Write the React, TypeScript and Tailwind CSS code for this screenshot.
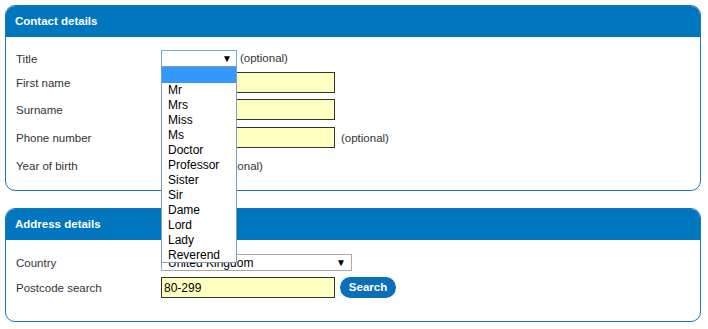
import React from "react";

const font = { fontFamily: '"Liberation Sans", Arial, sans-serif' };

function Arrow() {
  return <span className="text-[10px] leading-none text-black">▼</span>;
}

export default function App() {
  const options = ["Mr", "Mrs", "Miss", "Ms", "Doctor", "Professor", "Sister", "Sir", "Dame", "Lord", "Lady", "Reverend"];
  const label = "w-[145px] pt-[2px]";
  return (
    <div className="relative w-[708px] h-[329px] bg-white text-[11.5px] text-[#333]" style={font}>
      <div className="pt-[5px] pl-[5px] w-[701px]">
        {/* Contact details */}
        <div className="border border-[#1f74b5] rounded-[10px] overflow-hidden h-[186px]">
          <div className="bg-[#0076bf] h-[31px] flex items-center pl-[9px] text-white font-bold text-[11.5px]">Contact details</div>
          <div className="pl-[10px] pt-[13px] flex flex-col">
            <div className="flex items-center h-[17px]">
              <div className={label}>Title</div>
              <div className="w-[76px] h-[17px] border border-[#7aa7d9] bg-white flex items-center justify-end pr-[4px]"><Arrow /></div>
              <span className="ml-[3px] pt-[1px]">(optional)</span>
            </div>
            <div className="flex items-center h-[21px] mt-[5px]">
              <div className={label}>First name</div>
              <div className="w-[174px] h-[21px] border border-[#333] bg-[#ffffc0]" />
            </div>
            <div className="flex items-center h-[21px] mt-[6px]">
              <div className={label}>Surname</div>
              <div className="w-[174px] h-[21px] border border-[#333] bg-[#ffffc0]" />
            </div>
            <div className="flex items-center h-[21px] mt-[7px]">
              <div className={label}>Phone number</div>
              <div className="w-[174px] h-[21px] border border-[#333] bg-[#ffffc0]" />
              <span className="ml-[6px] pt-[2px]">(optional)</span>
            </div>
            <div className="flex items-center h-[17px] mt-[9px]">
              <div className={label}>Year of birth</div>
              <div className="w-[51px] h-[17px] border border-[#a9a9a9] bg-white" />
              <span className="ml-[3px] pt-[2px]">(optional)</span>
            </div>
          </div>
        </div>

        {/* Address details */}
        <div className="mt-[17px] border border-[#1f74b5] rounded-[10px] overflow-hidden h-[114px]">
          <div className="bg-[#0076bf] h-[31px] flex items-center pl-[9px] text-white font-bold text-[11.5px]">Address details</div>
          <div className="pl-[10px] pt-[14px] flex flex-col">
            <div className="flex items-center h-[17px]">
              <div className={label}>Country</div>
              <div className="w-[191px] h-[17px] border border-[#a9a9a9] bg-white flex items-center justify-between pl-[6px] pr-[5px] text-black text-[12px]">
                <span>United Kingdom</span>
                <Arrow />
              </div>
            </div>
            <div className="flex items-center h-[21px] mt-[6px]">
              <div className={label}>Postcode search</div>
              <div className="w-[174px] h-[21px] border border-[#333] bg-[#ffffc0] flex items-center pl-[2px] text-black text-[12px]">80-299</div>
              <button className="ml-[5px] w-[56px] h-[21px] rounded-full bg-[#0a6fb7] text-white font-bold text-[11.5px]">Search</button>
            </div>
          </div>
        </div>
      </div>

      {/* Open dropdown list */}
      <div className="absolute left-[161px] top-[66px] w-[76px] h-[197px] border border-[#7f9db9] bg-white text-black text-[12px]">
        <div className="h-[16px] bg-[#3399ff]" />
        <div className="flex flex-col pl-[6px]">
          {options.map((o) => (
            <div key={o} className="h-[15px] leading-[15px]">{o}</div>
          ))}
        </div>
      </div>
    </div>
  );
}
